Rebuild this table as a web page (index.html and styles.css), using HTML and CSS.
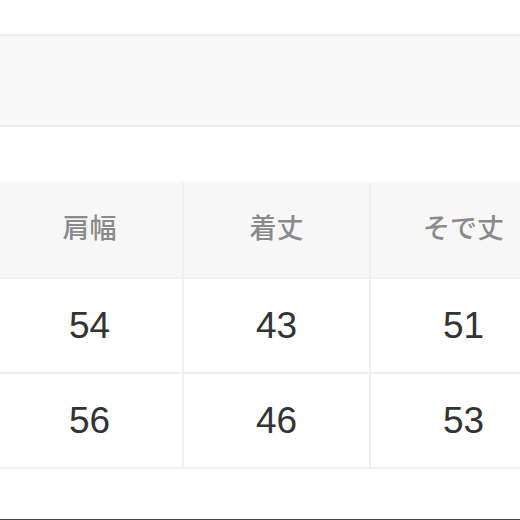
FILE: index.html
```html
<!DOCTYPE html>
<html lang="ja">
<head>
<meta charset="utf-8">
<link rel="stylesheet" href="styles.css">
</head>
<body>
<div class="page">
  <div class="band"></div>
  <div class="table">
    <div class="cell head">肩幅</div>
    <div class="cell head">着丈</div>
    <div class="cell head">そで丈</div>
    <div class="cell">54</div>
    <div class="cell">43</div>
    <div class="cell">51</div>
    <div class="cell">56</div>
    <div class="cell">46</div>
    <div class="cell">53</div>
  </div>
  <div class="bottom-line"></div>
</div>
</body>
</html>
```
FILE: styles.css
```css
html, body {
  margin: 0;
  padding: 0;
  background: #fff;
}
.page {
  width: 520px;
  height: 520px;
  overflow: hidden;
  position: relative;
  font-family: "Liberation Sans", "Noto Sans CJK JP", sans-serif;
}
.band {
  margin-top: 34px;
  height: 89px;
  background: #f8f8f8;
  border-top: 2px solid #ececec;
  border-bottom: 2px solid #ececec;
}
.table {
  margin-top: 54px;
  margin-left: -3px;
  width: 570px;
  display: grid;
  grid-template-columns: 185px 185px 185px;
  grid-template-rows: 95px 93px 93px;
  gap: 2px;
  background: #f0f0f0;
  border-top: 1px solid #fcfcfc;
  border-bottom: 2px solid #f0f0f0;
}
.cell {
  background: #fff;
  display: flex;
  align-items: center;
  justify-content: center;
  font-size: 37px;
  color: #333;
}
.head {
  background: #f7f7f7;
  color: #8a8a8a;
  font-size: 27px;
  font-weight: 500;
  font-family: "Noto Sans CJK JP", sans-serif;
  padding-bottom: 6px;
}
.bottom-line {
  position: absolute;
  left: 0;
  right: 0;
  bottom: 0;
  height: 1px;
  background: #444;
}
```
